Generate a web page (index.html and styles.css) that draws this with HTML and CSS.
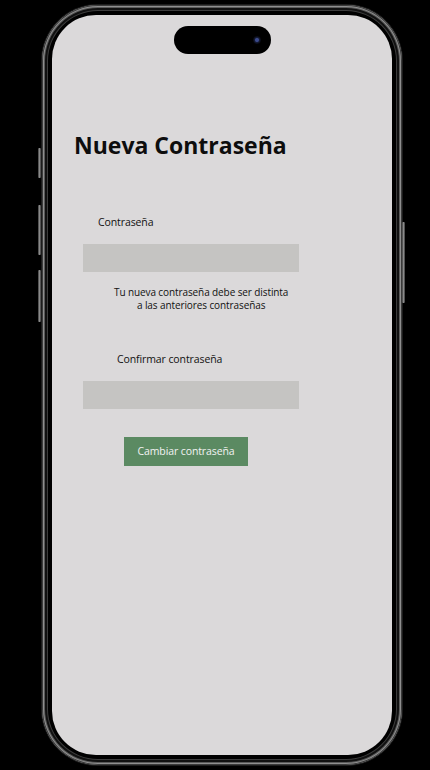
FILE: index.html
```html
<!DOCTYPE html>
<html lang="es">
<head>
<meta charset="utf-8">
<title>Nueva Contraseña</title>
<link rel="stylesheet" href="styles.css">
</head>
<body>
<div class="stage">
  <div class="phone">
    <span class="btn-side btn-action"></span>
    <span class="btn-side btn-vol-up"></span>
    <span class="btn-side btn-vol-down"></span>
    <span class="btn-side btn-power"></span>
    <div class="screen">
      <div class="island"><span class="camera"></span></div>
      <h1 class="title">Nueva Contraseña</h1>
      <label class="label label-pass">Contraseña</label>
      <div class="input"></div>
      <p class="hint">Tu nueva contraseña debe ser distinta<br>a las anteriores contraseñas</p>
      <label class="label label-confirm">Confirmar contraseña</label>
      <div class="input"></div>
      <button class="submit">Cambiar contraseña</button>
    </div>
  </div>
</div>
</body>
</html>
```
FILE: styles.css
```css
html, body {
  margin: 0;
  padding: 0;
  background: #000;
  width: 430px;
  height: 770px;
  overflow: hidden;
  font-family: "Open Sans", "Noto Sans", sans-serif;
}
.stage {
  padding: 5px 0 0 42px;
}
.phone {
  position: relative;
  width: 360px;
  height: 760px;
  box-sizing: border-box;
  padding: 10px;
  border-radius: 56px;
  background: #000;
  box-shadow:
    inset 0 0 0 1px #3a3a3a,
    inset 0 0 0 2px #8f8f8f,
    inset 0 0 0 3px #5a5a5a,
    inset 0 0 0 5px #111,
    inset 0 0 0 6px #3c3c3c,
    0 0 0 1px #1c1c1c;
}
.btn-side {
  position: absolute;
  width: 3px;
  border-radius: 1px;
  background: linear-gradient(90deg, #3a3a3a, #8a8a8a 50%, #3a3a3a);
}
.btn-action { left: -4px; top: 143px; height: 30px; }
.btn-vol-up { left: -4px; top: 200px; height: 50px; }
.btn-vol-down { left: -4px; top: 265px; height: 52px; }
.btn-power { right: -3px; top: 217px; height: 81px; }

.screen {
  height: 740px;
  border-radius: 44px;
  background: #dbd9da;
  display: flex;
  flex-direction: column;
  align-items: flex-start;
  overflow: hidden;
}
.island {
  align-self: center;
  margin-top: 11px;
  width: 97px;
  height: 28px;
  border-radius: 14px;
  background: #000;
  display: flex;
  justify-content: flex-end;
  align-items: center;
  padding-right: 10px;
  box-sizing: border-box;
}
.camera {
  width: 8px;
  height: 8px;
  border-radius: 50%;
  background: radial-gradient(circle, #3b4a8c 0 1.5px, #141a33 2.5px, #06070d 4px);
}
.title {
  margin: 76px 0 0 22px;
  font-size: 23px;
  line-height: 30px;
  font-weight: 700;
  color: #0d0d0d;
  letter-spacing: 0;
}
.label {
  font-size: 10.5px;
  line-height: 15px;
  color: #111;
  letter-spacing: -0.1px;
}
.label-pass {
  margin: 55px 0 0 46px;
}
.input {
  margin: 14px 0 0 31px;
  width: 216px;
  height: 28px;
  background: #c5c4c2;
}
.hint {
  margin: 14px 0 0 62px;
  font-size: 10px;
  line-height: 13px;
  white-space: nowrap;
  text-align: center;
  color: #111;
  letter-spacing: -0.1px;
}
.label-confirm {
  margin: 40px 0 0 65px;
}
.submit {
  margin: 28px 0 0 72px;
  width: 124px;
  height: 29px;
  border: 0;
  padding: 0;
  background: #5b8a62;
  color: #f2f2f2;
  font-family: "Open Sans", "Noto Sans", sans-serif;
  font-size: 10.5px;
  line-height: 29px;
  text-align: center;
  letter-spacing: -0.1px;
}
```
